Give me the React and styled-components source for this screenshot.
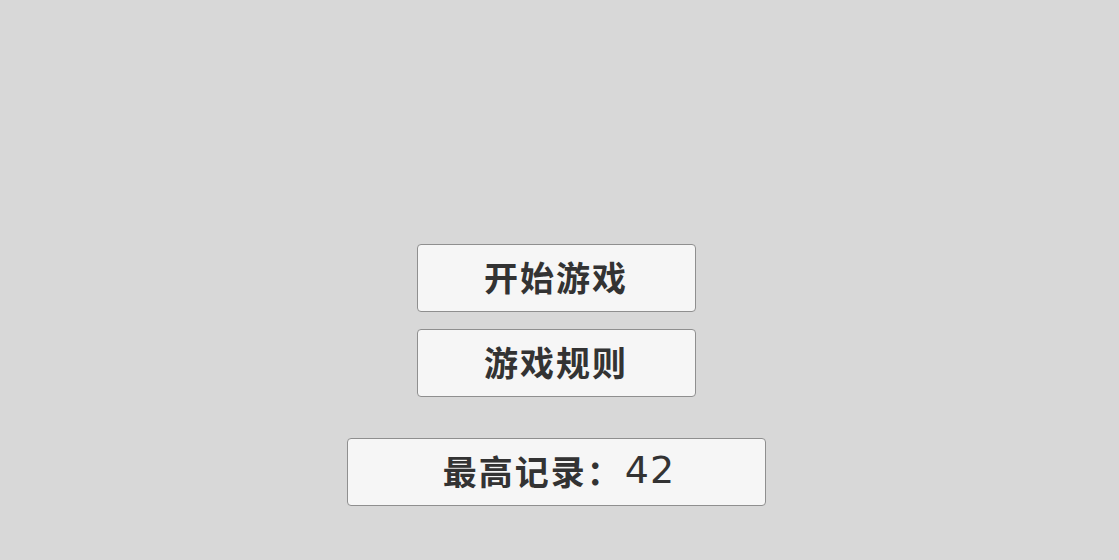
import styled, { createGlobalStyle } from "styled-components";

const GlobalStyle = createGlobalStyle`
  html, body {
    margin: 0;
    padding: 0;
    background: #d8d8d8;
  }
  body {
    font-family: "Noto Sans CJK SC", "Noto Sans", sans-serif;
  }
`;

const Screen = styled.div`
  width: 1119px;
  height: 560px;
  display: flex;
  flex-direction: column;
  align-items: center;
  padding-top: 244px;
  padding-right: 7px;
  box-sizing: border-box;
  background: #d8d8d8;
`;

const Menu = styled.div`
  display: flex;
  flex-direction: column;
  align-items: center;
  gap: 17px;
`;

const Panel = styled.button`
  box-sizing: border-box;
  width: ${(p) => p.$width}px;
  height: 68px;
  display: flex;
  align-items: center;
  justify-content: center;
  background: #f6f6f6;
  border: 1px solid #8f8f8f;
  border-radius: 4px;
  color: #333;
  font-family: "Noto Sans CJK SC", sans-serif;
  font-size: 34px;
  font-weight: 700;
  letter-spacing: 2px;
  padding: 0 0 4px;
  cursor: pointer;
`;

const Record = styled(Panel).attrs({ as: "div" })`
  margin-top: 41px;
  padding-left: 6px;
  cursor: default;
`;

const Score = styled.span`
  font-family: "DejaVu Sans", sans-serif;
  font-size: 38px;
  font-weight: 400;
  letter-spacing: 1px;
  margin-left: 2px;
`;

export default function App() {
  return (
    <>
      <GlobalStyle />
      <Screen>
        <Menu>
          <Panel $width={279}>开始游戏</Panel>
          <Panel $width={279}>游戏规则</Panel>
        </Menu>
        <Record $width={419}>
          最高记录：<Score>42</Score>
        </Record>
      </Screen>
    </>
  );
}
